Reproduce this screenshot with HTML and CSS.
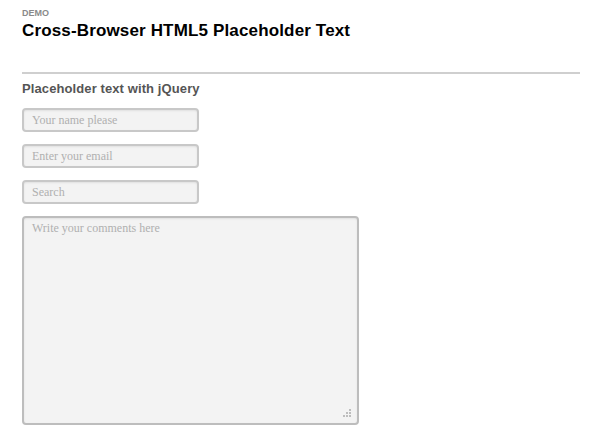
FILE: index.html
```html
<!DOCTYPE html>
<html>
<head>
<meta charset="utf-8">
<link rel="stylesheet" href="styles.css">
</head>
<body>
<div class="page">
  <header class="head">
    <div class="kicker">DEMO</div>
    <h1 class="title">Cross-Browser HTML5 Placeholder Text</h1>
  </header>
  <hr class="rule">
  <h2 class="subtitle">Placeholder text with jQuery</h2>
  <form class="form">
    <input class="field" type="text" placeholder="Your name please">
    <input class="field" type="text" placeholder="Enter your email">
    <input class="field" type="text" placeholder="Search">
    <div class="area-wrap">
      <textarea class="area" placeholder="Write your comments here"></textarea>
      <svg class="grip" width="9" height="9" viewBox="0 0 9 9">
        <rect x="7" y="1" width="2" height="2" fill="#bdbdbd"/>
        <rect x="4" y="4" width="2" height="2" fill="#bdbdbd"/>
        <rect x="7" y="4" width="2" height="2" fill="#bdbdbd"/>
        <rect x="1" y="7" width="2" height="2" fill="#bdbdbd"/>
        <rect x="4" y="7" width="2" height="2" fill="#bdbdbd"/>
        <rect x="7" y="7" width="2" height="2" fill="#bdbdbd"/>
      </svg>
    </div>
  </form>
</div>
</body>
</html>
```

FILE: styles.css
```css
html, body {
  margin: 0;
  padding: 0;
  background: #fff;
}
.page {
  padding: 8px 20px 0 22px;
  font-family: "Liberation Sans", Arial, sans-serif;
}
.head {
  display: flex;
  flex-direction: column;
}
.kicker {
  font-size: 9px;
  font-weight: bold;
  color: #8a8a8a;
  line-height: 11px;
}
.title {
  margin: 0;
  font-size: 17px;
  letter-spacing: 0.15px;
  line-height: 24px;
  font-weight: bold;
  color: #000;
}
.rule {
  margin: 29px 0 0 0;
  border: 0;
  height: 2px;
  background: #cfcfcf;
}
.subtitle {
  margin: 6px 0 0 0;
  font-size: 13px;
  letter-spacing: 0.1px;
  line-height: 17px;
  font-weight: bold;
  color: #555;
}
.form {
  display: flex;
  flex-direction: column;
  align-items: flex-start;
  gap: 12px;
  margin-top: 11px;
}
.field, .area {
  box-sizing: border-box;
  border: 2px solid #c8c8c8;
  border-radius: 4px;
  background: #f3f3f3;
  box-shadow: inset 0 1px 2px rgba(0,0,0,0.08);
  font-family: "Liberation Serif", "Times New Roman", serif;
  font-size: 12px;
  color: #333;
  margin: 0;
  outline: none;
}
.field {
  width: 177px;
  height: 24px;
  padding: 0 8px;
}
.area-wrap {
  position: relative;
  display: flex;
}
.area {
  width: 337px;
  height: 209px;
  padding: 3px 8px;
  resize: none;
  border-color: #bdbdbd;
}
.grip {
  position: absolute;
  right: 8px;
  bottom: 8px;
}
.field::placeholder, .area::placeholder {
  color: #b0b0b0;
}
```
